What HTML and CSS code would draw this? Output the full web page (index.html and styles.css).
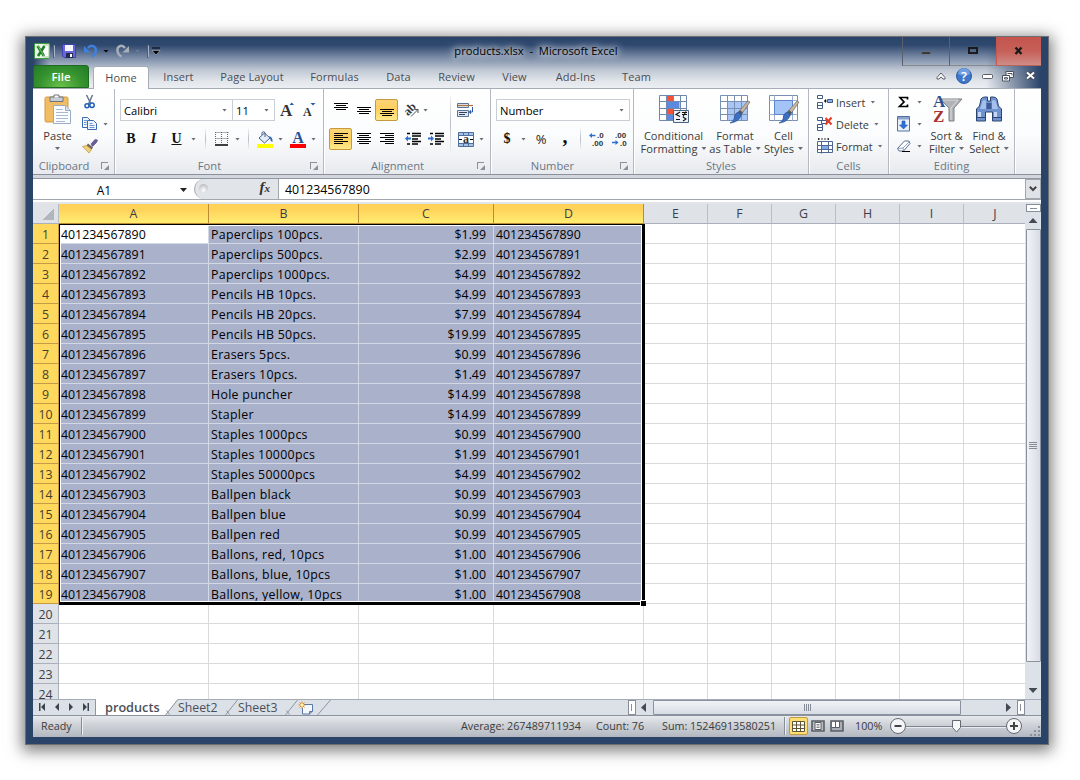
FILE: index.html
```html
<!DOCTYPE html>
<html>
<head>
    <meta charset="utf-8">
    <title>products.xlsx - Microsoft Excel</title>
    <link rel="stylesheet" href="styles.css">
</head>
<body>
<div class="window">
    <div class="top">
        <div class="titlebar">
            <div class="quick">
                <svg width="16" height="16" viewBox="0 0 16 16"><rect x=".5" y=".5" width="15" height="15" rx="1" fill="#e9f6e4" stroke="#3b9a3a"/><path d="M10 2h5v12h-5" fill="#fff" stroke="#9ccf93"/><path d="M3.500 3l6.500 10M10.500 3L4 13" stroke="#1d7c2a" stroke-width="2.600"/><path d="M4 3l6 10" stroke="#8fd07a" stroke-width=".8"/></svg>
                <i class="bar"></i>
                <svg class="save" width="14" height="14" viewBox="0 0 14 14"><path d="M.5.5h13v13H2l-1.500-1.500z" fill="#6a66da" stroke="#3f3fae"/><path d="M3 1h8v6H3z" fill="#f4f6ff"/><path d="M4 9h7v5H4z" fill="#222a55"/><path d="M8 10h2v3H8z" fill="#fff"/></svg>
                <svg class="undo" width="14" height="14" viewBox="0 0 14 14"><path d="M4 4C7 0 12.500 2 11.800 7c-.3 3-2 4.500-4 5.500" fill="none" stroke="#3f7fe0" stroke-width="2.400"/><path d="M0 2v6.500h6.500z" fill="#3f7fe0"/></svg>
                <i class="arrow dark"></i>
                <svg class="redo" width="14" height="14" viewBox="0 0 14 14"><path d="M9 4C6 0 .8 2 1.500 7c.3 3 2 4.500 4 5.500" fill="none" stroke="#a9afb8" stroke-width="2.400"/><path d="M13 2v6.500H6.500z" fill="#a9afb8"/></svg>
                <i class="arrow dim"></i>
                <i class="bar second"></i>
                <svg width="8" height="8" viewBox="0 0 8 8"><path d="M0 1h8" stroke="#000"/><path d="M0 3.500h8L4 8z" fill="#000" stroke="#ccd3dd" stroke-width=".5"/></svg>
            </div>
            <div class="title">products.xlsx&nbsp; -&nbsp; Microsoft Excel</div>
            <div class="controls">
                <span class="control"><svg width="12" height="12" viewBox="0 0 12 12"><path d="M1.500 7h9v2h-9z" fill="#222" stroke="#777" stroke-width=".6"/></svg></span>
                <span class="control"><svg width="12" height="12" viewBox="0 0 12 12"><path d="M2 3h8v5H2z" fill="none" stroke="#1b1b1b" stroke-width="2"/></svg></span>
                <span class="control close"><svg width="12" height="12" viewBox="0 0 12 12"><path d="M2.500 2.500l6 6.500M8.500 2.500l-6 6.500" stroke="#1b1b1b" stroke-width="2.400"/></svg></span>
            </div>
        </div>
        <div class="tabs">
            <span class="file">File</span>
            <span class="tab active">Home</span>
            <span class="tab t-insert">Insert</span>
            <span class="tab t-layout">Page Layout</span>
            <span class="tab t-formulas">Formulas</span>
            <span class="tab t-data">Data</span>
            <span class="tab t-review">Review</span>
            <span class="tab t-view">View</span>
            <span class="tab t-addins">Add-Ins</span>
            <span class="tab t-team">Team</span>
            <span class="help">
                <svg width="10" height="8" viewBox="0 0 10 8"><path d="M1 5.500L5 1l4 4.500V7H7L5 4.800 3 7H1z" fill="#fff" stroke="#555b64"/></svg>
                <svg width="16" height="16" viewBox="0 0 16 16"><circle cx="8" cy="8" r="7.500" fill="#3f78c8" stroke="#2c5ca8"/><path d="M2 6a6 6 0 0 1 12 0q-6 3-12 0" fill="#6f9fe0"/><text x="8" y="12.500" text-anchor="middle" class="qmark">?</text></svg>
                <svg width="11" height="6" viewBox="0 0 11 6"><rect x=".5" y="1.500" width="10" height="4" rx="1" fill="#fff" stroke="#555b64"/></svg>
                <svg width="12" height="11" viewBox="0 0 12 11"><path d="M4 .5h7.500v6H4z" fill="#fff" stroke="#4c535d"/><path d="M5.500 2.500H10v2" fill="none" stroke="#4c535d"/><path d="M.5 4.500h7v5.500h-7z" fill="#fff" stroke="#4c535d"/><path d="M2.500 6.700h3v1.300h-3z" fill="none" stroke="#4c535d"/></svg>
                <svg width="11" height="10" viewBox="0 0 11 10"><path d="M2 1.500l7 6M9 1.500l-7 6" stroke="#444b55" stroke-width="4"/><path d="M2 1.500l7 6M9 1.500l-7 6" stroke="#fff" stroke-width="2"/></svg>
            </span>
        </div>
    </div>

    <div class="ribbon">
        <div class="group clipboard">
            <div class="body">
                <div class="big">
                    <svg width="28" height="32" viewBox="0 0 28 32"><rect x="1" y="3" width="23" height="25" rx="1.500" fill="#f0bd64" stroke="#d29a3c"/><path d="M6 3h13v4.500H6z" fill="#c9ccd2" stroke="#6e747d"/><path d="M10 3.500V1h5v2.500" fill="#fff" stroke="#6e747d"/><path d="M9.500 11.500h12l5 5v13h-17z" fill="#fbfdff" stroke="#9aacc4"/><path d="M21.500 11.500v5h5" fill="#d6e2f0" stroke="#9aacc4"/><path d="M12 15.500h7M12 18.500h12M12 21.500h12M12 24.500h12M12 27.500h9" stroke="#a9b9ce"/></svg>
                    <span>Paste</span>
                    <i class="arrow"></i>
                </div>
                <div class="small">
                    <div><svg width="16" height="16" viewBox="0 0 16 16"><path d="M4.500 1l4.500 9M10.500 1L6.500 10" stroke="#66758c" stroke-width="1.500"/><circle cx="5" cy="11.800" r="2" fill="none" stroke="#1f5fb8" stroke-width="1.500"/><circle cx="10" cy="11.300" r="2.200" fill="none" stroke="#1f5fb8" stroke-width="1.500"/></svg></div>
                    <div><svg width="16" height="16" viewBox="0 0 16 16"><path d="M.5 1.500h5l2.500 2.500v7.500H.5z" fill="#eef5fd" stroke="#3b69b0"/><path d="M5.500 4.500h6l3 3v6h-9z" fill="#eef5fd" stroke="#3b69b0"/><path d="M2 4.500h3M2 6.500h2.500M2 8.500h2.500M7.500 7.500h3M7.500 9.500h5M7.500 11.500h5" stroke="#6f97cf"/></svg><i class="arrow"></i></div>
                    <div><svg width="16" height="16" viewBox="0 0 16 16"><path d="M9 6l4-4.500 2.500.5-1 2.500-4 4z" fill="#6c5c9c" stroke="#4a3e78" stroke-width=".6"/><path d="M6 5.500l5 4-1.500 2-5-4z" fill="#6d655c"/><path d="M.5 8.500l4-1 5 4L7 15z" fill="#efd07a" stroke="#bb9440" stroke-width=".7"/></svg></div>
                </div>
            </div>
            <div class="label">Clipboard<i class="launch"></i></div>
        </div>

        <div class="group font">
            <div class="body rows">
                <div class="row font-1">
                    <span class="combo">Calibri<i class="arrow"></i></span>
                    <span class="combo size">11<i class="arrow"></i></span>
                    <svg width="16" height="18" viewBox="0 0 16 18"><text x="1" y="15" class="serif s17">A</text><path d="M10.500 4H15L12.700 1.500z" fill="#2b5aa8"/></svg>
                    <svg width="15" height="18" viewBox="0 0 15 18"><text x="1" y="15" class="serif s12">A</text><path d="M8.500 2h5L11 4.500z" fill="#2b5aa8"/></svg>
                </div>
                <div class="row font-2">
                    <b class="serif-btn">B</b>
                    <b class="serif-btn it">I</b>
                    <b class="serif-btn un">U</b>
                    <i class="arrow"></i>
                    <i class="sep"></i>
                    <svg width="14" height="14" viewBox="0 0 14 14"><path d="M.5.5h13M.5 6.500h13M.5 0v12M6.500 0v12M12.500 0v12" stroke="#666" stroke-dasharray="1 1" fill="none"/><path d="M0 13h13" stroke="#000" stroke-width="1.500"/></svg>
                    <i class="arrow"></i>
                    <i class="sep"></i>
                    <svg width="16" height="17" viewBox="0 0 16 17"><path d="M2 7l5.500-5L13 7l-5.500 5z" fill="#e3edf8" stroke="#4b6188"/><path d="M5 4V1.500Q6.500 0 8 1.500V6" fill="none" stroke="#4b6188"/><path d="M12 5q4 1 3.500 6-2-.5-2.500-4z" fill="#2f67b8"/><path d="M0 13h16v4H0z" fill="#ff0"/></svg>
                    <i class="arrow"></i>
                    <svg width="16" height="17" viewBox="0 0 16 17"><text x="8" y="11.500" text-anchor="middle" class="serif blue s16">A</text><path d="M0 13h16v4H0z" fill="#f00"/></svg>
                    <i class="arrow"></i>
                </div>
            </div>
            <div class="label">Font<i class="launch"></i></div>
        </div>

        <div class="group align">
            <div class="body">
                <div class="rows">
                    <div class="row align-cols">
                        <span class="btn"><svg class="up3" width="14" height="12" viewBox="0 0 14 12"><path d="M0 1.500h14M2 3.500h10M0 5.500h14M2 7.500h10" stroke="#000"/></svg></span>
                        <span class="btn"><svg width="14" height="12" viewBox="0 0 14 12"><path d="M0 3.500h14M2 5.500h10M0 7.500h14M2 9.500h10" stroke="#000"/></svg></span>
                        <span class="btn on"><svg width="14" height="12" viewBox="0 0 14 12"><path d="M0 5.500h14M2 7.500h10M0 9.500h14M2 11.500h10" stroke="#000"/></svg></span>
                        <span></span>
                        <span class="orient"><svg width="16" height="16" viewBox="0 0 16 16"><text x="-1" y="11" transform="rotate(-45 5 8)" class="serif s12">ab</text><path d="M6 14.500l7-7M9.500 7.500H13V11" stroke="#555" fill="none"/></svg><i class="arrow"></i></span>
                    </div>
                    <div class="row align-cols">
                        <span class="btn on"><svg width="14" height="12" viewBox="0 0 14 12"><path d="M0 .5h14M0 2.500h9M0 4.500h14M0 6.500h9M0 8.500h14M0 10.500h9" stroke="#000"/></svg></span>
                        <span class="btn"><svg width="14" height="12" viewBox="0 0 14 12"><path d="M0 .5h14M2 2.500h10M0 4.500h14M2 6.500h10M0 8.500h14M2 10.500h10" stroke="#000"/></svg></span>
                        <span class="btn"><svg width="14" height="12" viewBox="0 0 14 12"><path d="M0 .5h14M5 2.500h9M0 4.500h14M5 6.500h9M0 8.500h14M5 10.500h9" stroke="#000"/></svg></span>
                        <span></span>
                        <span class="btn"><svg width="16" height="14" viewBox="0 0 16 14"><path d="M2 1.500h3M7 1.500h9M7 4h9M7 7h6M7 9.500h9M2 12h3M7 12h6" stroke="#000" stroke-width="1.300"/><path d="M0 6.500l3-3v2h3v2H3v2z" fill="#2f6fd0"/></svg></span>
                        <span class="btn"><svg width="16" height="14" viewBox="0 0 16 14"><path d="M2 1.500h3M7 1.500h9M7 4h9M7 7h6M7 9.500h9M2 12h3M7 12h6" stroke="#000" stroke-width="1.300"/><path d="M6 6.500l-3-3v2H0v2h3v2z" fill="#2f6fd0"/></svg></span>
                    </div>
                </div>
                <i class="sep tall"></i>
                <div class="rows">
                    <div class="row merge"><svg width="17" height="16" viewBox="0 0 17 16"><path d="M.5 1.500h11v4H.5zM.5 8.500h11v6H.5z" fill="#dce8f6" stroke="#5a7498"/><path d="M2 10.500h8M2 12.500h6" stroke="#33445e"/><path d="M1 3.500h15" stroke="#b0703a" stroke-width="1.200"/><path d="M15.500 5v5h-2" stroke="#2c5ca8" fill="none"/><path d="M11.500 10l2.500-2.200v4.400z" fill="#2c5ca8"/></svg></div>
                    <div class="row merge"><svg width="16" height="15" viewBox="0 0 16 15"><path d="M.5.5h15v14H.5z" fill="#a9c2e4" stroke="#4d6f9f"/><path d="M.5 3.500h15M.5 11.500h15M5.500 0v3.500M10.500 0v3.500M5.500 11.500V15M10.500 11.500V15" stroke="#4d6f9f"/><path d="M1 4h14v7H1z" fill="#fff"/><text x="8" y="10.500" text-anchor="middle" class="serif s12">a</text><path d="M1 7.500h3M12 7.500h3" stroke="#000"/></svg><i class="arrow"></i></div>
                </div>
            </div>
            <div class="label">Alignment<i class="launch"></i></div>
        </div>

        <div class="group number">
            <div class="body rows">
                <div class="row"><span class="combo num">Number<i class="arrow"></i></span></div>
                <div class="row number-2">
                    <b class="serif-btn">$</b>
                    <i class="arrow"></i>
                    <span class="percent">%</span>
                    <b class="comma">,</b>
                    <i class="sep"></i>
                    <svg width="16" height="14" viewBox="0 0 16 14"><text x="8" y="5.500" class="dec">.0</text><text x="3" y="13.500" class="dec">.00</text><path d="M0 3.500l3-2.500v1.700h3.500v1.600H3V6z" fill="#2f6fd0"/></svg>
                    <svg width="16" height="14" viewBox="0 0 16 14"><text x="3" y="5.500" class="dec">.00</text><text x="8" y="13.500" class="dec">.0</text><path d="M6.500 10.500l-3-2.500v1.700H0v1.600h3.500V13z" fill="#2f6fd0"/></svg>
                </div>
            </div>
            <div class="label">Number<i class="launch"></i></div>
        </div>

        <div class="group styles">
            <div class="body">
                <div class="big">
                    <svg width="32" height="30" viewBox="0 0 32 30"><path d="M1.500 1.500h27v25h-27z" fill="#fff"/><path d="M8.500 1.500h7v6h-7zM8.500 14.500h7v6h-7z" fill="#f5523c"/><path d="M8.500 8h13v6h-13zM8.500 20.500h7v6h-7z" fill="#5b8ae0"/><path d="M1.500 1.500h27v25h-27zM8.500 1.500v25M15.500 1.500v25M22.500 1.500v25M1.500 7.500h27M1.500 14.500h27M1.500 20.500h27" fill="none" stroke="#6f88ad"/><path d="M15.500 16.500h15v12h-15z" fill="#eef2f8" stroke="#4c607f"/><path d="M22 18l-4 2.500 4 2M18 25.500h4M24 20.500h5M24 18.500h5M28 17.500l-3 5M25 23l3 2-3 2" fill="none" stroke="#111" stroke-width="1.100"/></svg>
                    <span>Conditional</span><span>Formatting<i class="arrow"></i></span>
                </div>
                <div class="big">
                    <svg width="32" height="30" viewBox="0 0 32 30"><path d="M1.500 1.500h27v25h-27z" fill="#fff"/><path d="M8.500 7.500h20v19h-20z" fill="#a9c6f6"/><path d="M1.500 1.500h27v25h-27zM8.500 1.500v25M15.500 1.500v25M22.500 1.500v25M1.500 7.500h27M1.500 14.500h27M1.500 20.500h27" fill="none" stroke="#7990b5"/><path d="M31 8L22 21l-3-2.500L29 7z" fill="#c9b79c" stroke="#6c6c6c" stroke-width=".7"/><path d="M22 21l-3-2.500 2-2.500 3 2.500z" fill="#555c66"/><path d="M19 18l3.500 3q-3 7.500-11.500 8 4.500-2 4.500-7 1-3 3.500-4z" fill="#3d6fc0" stroke="#244e92" stroke-width=".6"/></svg>
                    <span>Format</span><span>as Table<i class="arrow"></i></span>
                </div>
                <div class="big">
                    <svg width="32" height="30" viewBox="0 0 32 30"><path d="M1.500 1.500h28v25h-28z" fill="#fff" stroke="#7990b5"/><path d="M1.500 6.500h28M1.500 20.500h28M6.500 1.500v25M24.500 1.500v25M15.500 20.500v6" stroke="#9db0cd"/><path d="M6.500 6.500h18v14h-18z" fill="#a4c3f6" stroke="#5f86c6"/><path d="M31 8L22 21l-3-2.500L29 7z" fill="#c9b79c" stroke="#6c6c6c" stroke-width=".7"/><path d="M22 21l-3-2.500 2-2.500 3 2.500z" fill="#555c66"/><path d="M19 18l3.500 3q-3 7.500-11.500 8 4.500-2 4.500-7 1-3 3.500-4z" fill="#3d6fc0" stroke="#244e92" stroke-width=".6"/></svg>
                    <span>Cell</span><span>Styles<i class="arrow"></i></span>
                </div>
            </div>
            <div class="label">Styles</div>
        </div>

        <div class="group cells">
            <div class="body">
                <div class="small">
                    <div><svg width="16" height="16" viewBox="0 0 16 16"><path d="M.5 1.500h5v3h-5zM.5 8.500h5v6h-5zM.5 11.500h5" fill="#fff" stroke="#3f5c88"/><path d="M10.500 5.500h5v3h-5z" fill="#8fb0e4" stroke="#3f5c88"/><path d="M9.500 7H7M8.500 5.500v3" stroke="#000" stroke-width="1.200"/></svg><span>Insert</span><i class="arrow"></i></div>
                    <div><svg width="16" height="16" viewBox="0 0 16 16"><path d="M.5 1.500h5v3h-5zM.5 8.500h5v6h-5zM.5 11.500h5M4.500 4.500h5v3h-5z" fill="#fff" stroke="#3f5c88"/><path d="M8.500 2l6 6.500M14.500 1.500l-6 7" stroke="#e83a1e" stroke-width="2"/></svg><span>Delete</span><i class="arrow"></i></div>
                    <div><svg width="16" height="16" viewBox="0 0 16 16"><path d="M.5 3.500h15v11H.5z" fill="#fff"/><path d="M5 7h6v4H5z" fill="#7fa8ee"/><path d="M.5 3.500h15v11H.5zM4.500 3.500v12M11.500 3.500v11M.5 7.500h15M.5 11.500h15" fill="none" stroke="#4d6791"/><path d="M1 1h11M1.500 0v2.500M11.500 0v2.500" stroke="#333" stroke-dasharray="2 1"/></svg><span>Format</span><i class="arrow"></i></div>
                </div>
            </div>
            <div class="label">Cells</div>
        </div>

        <div class="group editing">
            <div class="body">
                <div class="small">
                    <div><svg width="16" height="14" viewBox="0 0 16 14"><path d="M11.500 4.500V2.500H4L8 7l-4.500 4.500h8v-2" fill="none" stroke="#000" stroke-width="1.700"/></svg><i class="arrow"></i></div>
                    <div><svg width="16" height="16" viewBox="0 0 16 16"><path d="M1.500.5h12v14.500h-12z" fill="#e9f0fa" stroke="#50709f"/><path d="M2 1h11v2.500H2z" fill="#8aa5cd"/><path d="M6 5h3v4h2.500L7.500 13 3.500 9H6z" fill="#2f6fd8" stroke="#1e50a8" stroke-width=".6"/></svg><i class="arrow"></i></div>
                    <div><svg width="16" height="16" viewBox="0 0 16 16"><path d="M1.500 10.500L8.500 3H13l1 2.500L7.500 13H3z" fill="#fff" stroke="#5a6f94"/><path d="M1.500 10.500L7 10l6.500-6.500M7 10l.5 3" fill="none" stroke="#8ea2c4"/><path d="M6 13.500h8" stroke="#000"/></svg><i class="arrow"></i></div>
                </div>
                <div class="big">
                    <svg width="32" height="30" viewBox="0 0 32 30"><path d="M9 5h22l-8 9v13h-5V14z" fill="#b1b3b6" stroke="#7f8185"/><path d="M12 6h15l-7 8v12" fill="none" stroke="#dcdddf"/><text x="2" y="13" class="serif blue s17">A</text><text x="2" y="27.500" class="serif red s17">Z</text></svg>
                    <span>Sort &amp;</span><span>Filter<i class="arrow"></i></span>
                </div>
                <div class="big">
                    <svg width="32" height="30" viewBox="0 0 32 30"><path d="M12 3h2.500v4h3V3H20q3 0 4 2l1.500 7 3 3v12h-9v-9h-7v9h-9V15l3-3L8 5q1-2 4-2z" fill="#6f93cf" stroke="#2c4472"/><path d="M9.500 7q2-2 3.500 0v8H7zM19 7q2-2 3.500 0l2.500 8h-6z" fill="#a5c0ec"/><path d="M5 18h3v5H5zM21 18h3v5h-3z" fill="#c5d8f6"/><path d="M13.500 9h5v6h-5z" fill="#3e5b93"/><path d="M3.500 23.500h9M19.500 23.500h9" stroke="#2c4472"/></svg>
                    <span>Find &amp;</span><span>Select<i class="arrow"></i></span>
                </div>
            </div>
            <div class="label">Editing</div>
        </div>
    </div>

    <div class="formula">
        <div class="name"><span>A1</span><i class="arrow black"></i></div>
        <div class="fx"><i class="knob"></i><span>f<small>x</small></span></div>
        <div class="value">401234567890</div>
        <div class="expand"><svg width="8" height="6" viewBox="0 0 8 6"><path d="M.8.8L4 4 7.200.8" fill="none" stroke="#444" stroke-width="2"/></svg></div>
    </div>

    <div class="main">
        <div class="sheet">
            <div id="grid"></div>
            <div class="selection"></div>
            <div class="handle"></div>
        </div>
        <div class="vscroll">
            <i class="vsplit"></i>
            <i class="tri up"></i>
            <div class="vthumb"><i></i><i></i><i></i><i></i></div>
            <i class="tri down"></i>
        </div>
    </div>

    <div class="bottom">
        <div class="nav">
            <svg width="8" height="8" viewBox="0 0 8 8"><path d="M1 0h1.500v8H1zM7 0v8L3 4z" fill="#3c4450"/></svg>
            <svg width="8" height="8" viewBox="0 0 8 8"><path d="M6 0v8L2 4z" fill="#3c4450"/></svg>
            <svg width="8" height="8" viewBox="0 0 8 8"><path d="M2 0v8l4-4z" fill="#3c4450"/></svg>
            <svg width="8" height="8" viewBox="0 0 8 8"><path d="M5.500 0H7v8H5.500zM1 0v8l4-4z" fill="#3c4450"/></svg>
        </div>
        <span class="stab current">products</span>
        <svg class="slant" width="13" height="15" viewBox="0 0 13 15"><path d="M0-1h12.500L.5 15H0z" fill="#fff"/><path d="M.5 15L12.500 0M1.500 10.500l3 4" stroke="#8e959f"/></svg>
        <span class="stab">Sheet2</span>
        <svg class="slant" width="13" height="15" viewBox="0 0 13 15"><path d="M.5 15L12.500 0" stroke="#8e959f"/><path d="M1.500 10.500l3 4" stroke="#8e959f"/></svg>
        <span class="stab">Sheet3</span>
        <svg class="slant" width="13" height="15" viewBox="0 0 13 15"><path d="M.5 15L12.500 0" stroke="#8e959f"/><path d="M1.500 10.500l3 4" stroke="#8e959f"/></svg>
        <span class="stab new"><svg width="16" height="14" viewBox="0 0 16 14"><path d="M6 3.500h8.500v7l-3 2.500H4.500V7" fill="#f4f8fd" stroke="#5b77a8"/><path d="M14.500 10.500h-3V13" fill="#9fb7dd" stroke="#5b77a8"/><path d="M4 .5v7M.5 4h7M1.500 1.500l5 5M6.500 1.500l-5 5" stroke="#e08a1c"/><circle cx="4" cy="4" r="1.500" fill="#fff3b0"/></svg></span>
        <svg class="slant" width="14" height="15" viewBox="0 0 14 15"><path d="M.5 15L13.500 0" stroke="#8e959f"/></svg>
        <div class="fill"></div>
        <i class="hsplit"></i>
        <div class="hscroll">
            <i class="tri left"></i>
            <div class="hthumb"><i></i><i></i><i></i><i></i></div>
            <i class="tri right"></i>
        </div>
        <i class="hsplit"></i>
        <div class="corner"></div>
    </div>

    <div class="status">
        <span class="ready">Ready</span>
        <i class="ssep"></i>
        <span class="stats"><span class="avg">Average: 267489711934</span><span class="count">Count: 76</span><span class="sum">Sum: 15246913580251</span></span>
        <i class="ssep"></i>
        <div class="views">
            <span class="view on"><svg width="13" height="11" viewBox="0 0 13 11"><path d="M.5.5h12v10H.5z" fill="#fff" stroke="#5c5636"/><path d="M4.500 0v11M8.500 0v11M0 4h13M0 7.500h13" stroke="#5c5636"/></svg></span>
            <span class="view"><svg width="14" height="12" viewBox="0 0 14 12"><path d="M1 1h12v10H1z" fill="#b9bec5" stroke="#5a5f66" stroke-width="1.600"/><path d="M4 2.500h6v7H4z" fill="#fff" stroke="#5a5f66"/><path d="M5.500 4.500h3M5.500 6h3M5.500 7.500h3" stroke="#888"/></svg></span>
            <span class="view"><svg width="14" height="12" viewBox="0 0 14 12"><path d="M1 1h12v10H1z" fill="#a9aeb6" stroke="#5a5f66" stroke-width="1.600"/><path d="M2 2h3v5H2zM6 2h3v5H6z" fill="#fff"/><path d="M5.500 1v6.500M9.500 1v6.500H2" stroke="#5a5f66" fill="none"/></svg></span>
        </div>
        <span class="zoom">100%</span>
        <svg class="slider" width="134" height="18" viewBox="0 0 134 18"><path d="M17 9.500h100" stroke="#7c838e"/><path d="M17 10.500h100" stroke="#e8eaee"/><circle cx="9" cy="9" r="7.500" fill="#f4f5f7" stroke="#636973"/><path d="M5.500 9h7" stroke="#444" stroke-width="2"/><circle cx="125" cy="9" r="7.500" fill="#f4f5f7" stroke="#636973"/><path d="M121 9h8M125 5v8" stroke="#444" stroke-width="2"/><path d="M63.500 3.500h8v7L67.500 15l-4-4.500z" fill="#f6f7f8" stroke="#636973"/></svg>
        <svg class="grip" width="12" height="12" viewBox="0 0 12 12"><path d="M9 1h2v2H9zM9 5h2v2H9zM5 5h2v2H5zM9 9h2v2H9zM5 9h2v2H5zM1 9h2v2H1z" fill="#8b919b"/></svg>
    </div>
</div>

<script>
    const columns = ['A', 'B', 'C', 'D', 'E', 'F', 'G', 'H', 'I', 'J'];
    const products = [
        ['401234567890', 'Paperclips 100pcs.', '$1.99'],
        ['401234567891', 'Paperclips 500pcs.', '$2.99'],
        ['401234567892', 'Paperclips 1000pcs.', '$4.99'],
        ['401234567893', 'Pencils HB 10pcs.', '$4.99'],
        ['401234567894', 'Pencils HB 20pcs.', '$7.99'],
        ['401234567895', 'Pencils HB 50pcs.', '$19.99'],
        ['401234567896', 'Erasers 5pcs.', '$0.99'],
        ['401234567897', 'Erasers 10pcs.', '$1.49'],
        ['401234567898', 'Hole puncher', '$14.99'],
        ['401234567899', 'Stapler', '$14.99'],
        ['401234567900', 'Staples 1000pcs', '$0.99'],
        ['401234567901', 'Staples 10000pcs', '$1.99'],
        ['401234567902', 'Staples 50000pcs', '$4.99'],
        ['401234567903', 'Ballpen black', '$0.99'],
        ['401234567904', 'Ballpen blue', '$0.99'],
        ['401234567905', 'Ballpen red', '$0.99'],
        ['401234567906', 'Ballons, red, 10pcs', '$1.00'],
        ['401234567907', 'Ballons, blue, 10pcs', '$1.00'],
        ['401234567908', 'Ballons, yellow, 10pcs', '$1.00']
    ];

    const grid = document.getElementById('grid');

    function addCell(row, className, text) {
        const cell = document.createElement('div');
        cell.className = className;
        cell.textContent = text || '';
        row.appendChild(cell);
    }

    function addRow() {
        const row = document.createElement('div');
        row.className = 'grid-row';
        grid.appendChild(row);
        return row;
    }

    const head = addRow();
    addCell(head, 'select-all');
    columns.forEach((name, i) => addCell(head, i < 4 ? 'col-head picked' : 'col-head', name));

    const extra = ['', ' product', ' price', ''];

    for (let r = 0; r < 24; r++) {
        const row = addRow();
        const product = products[r];
        addCell(row, product ? 'row-head picked' : 'row-head', String(r + 1));
        columns.forEach((name, i) => {
            if (product && i < 4) {
                addCell(row, 'cell picked' + extra[i], i === 3 ? product[0] : product[i]);
            } else {
                addCell(row, 'cell');
            }
        });
    }
</script>
</body>
</html>
```

FILE: styles.css
```css
* {
    box-sizing: border-box;
}
body {
    margin: 0;
    width: 1080px;
    height: 780px;
    overflow: hidden;
    background: #fff;
    font-family: "Open Sans", "Noto Sans", sans-serif;
    font-size: 11px;
    color: #3b3b3b;
}
svg {
    display: block;
    flex: none;
    overflow: visible;
}
.window {
    width: 1024px;
    height: 709px;
    margin: 36px 0 0 25px;
    padding: 0 7px 7px;
    border: 1px solid #6d6f73;
    background: #2a4369;
    box-shadow: 0 3px 14px 3px rgba(0, 0, 0, 0.5);
}

/* title bar and tabs */
.top {
    height: 52px;
    margin: 0 -7px;
    padding: 0 7px;
    background: linear-gradient(90deg, #2a4369 7px, rgba(42, 67, 105, 0) 24px, rgba(42, 67, 105, 0) 960px, #2a4369 1015px), linear-gradient(#2a4369, #2f486e 8px, #8292ac 22px, #bfc7d3 33px, #e2e6eb 44px, #eceff3);
}
.titlebar {
    display: flex;
    height: 29px;
}
.quick {
    display: flex;
    align-items: center;
    width: 412px;
    padding: 0 0 1px 1px;
}
.bar {
    width: 2px;
    height: 13px;
    margin-left: 3px;
    border: 1px solid #4b5c78;
    border-right-color: #a7b3c6;
}
.bar.second {
    margin-left: 7px;
    margin-right: 3px;
}
.save { margin-left: 7px; }
.undo { margin-left: 8px; }
.redo { margin-left: 7px; }
.quick .arrow { margin-left: 5px; }
.title {
    width: 182px;
    margin-top: 5px;
    line-height: 18px;
    font-size: 11.200px;
    text-align: center;
    color: #000;
    white-space: nowrap;
    text-shadow: 0 0 6px #fff, 0 0 8px #e5eaf2, 0 0 12px #c5d0e0;
}
.controls {
    display: flex;
    margin-left: auto;
}
.control {
    display: flex;
    align-items: center;
    justify-content: center;
    width: 47px;
    height: 29px;
    border-left: 1px solid #59606c;
    border-bottom: 1px solid #87898d;
}
.control.close {
    width: 45px;
    border-left-color: #c3574f;
    border-bottom-color: #b9635c;
    background: linear-gradient(#c4544c, #c66058 50%, #cf8c86);
}
.tabs {
    display: flex;
    align-items: flex-end;
    height: 23px;
    border-bottom: 1px solid #a6adb8;
}
.file {
    width: 56px;
    height: 23px;
    border: 1px solid #1c6b1f;
    border-radius: 3px 3px 0 0;
    background: radial-gradient(ellipse at 50% 100%, #6cc24a, #36942f 55%, #237a26);
    color: #fff;
    font-weight: 600;
    font-size: 11.500px;
    line-height: 22px;
    text-align: center;
}
.tab {
    line-height: 23px;
    text-align: center;
    white-space: nowrap;
    font-size: 11px;
    letter-spacing: 0.100px;
    color: #4a4e54;
}
.tab.active {
    width: 56px;
    height: 23px;
    margin: 0 0 -1px 4px;
    border: 1px solid #a6adb8;
    border-bottom: none;
    border-radius: 3px 3px 0 0;
    background: #fff;
    line-height: 22px;
}
.t-insert { width: 59px; }
.t-layout { width: 88px; }
.t-formulas { width: 77px; }
.t-data { width: 51px; }
.t-review { width: 65px; }
.t-view { width: 51px; }
.t-addins { width: 71px; }
.t-team { width: 51px; }
.help {
    display: flex;
    align-items: center;
    gap: 10px;
    height: 22px;
    margin-left: auto;
    padding: 0 5px 2px 0;
}
.help svg:nth-child(3) { margin-right: -1px; }
.help svg:nth-child(4) { margin-right: 1px; }
.qmark {
    font: 600 13px "Open Sans", sans-serif;
    fill: #fff;
}

/* ribbon */
.ribbon {
    display: flex;
    height: 86px;
    border-bottom: 1px solid #8b909a;
    background: linear-gradient(#fff, #fbfcfd 55%, #e7eaee);
}
.group {
    display: flex;
    flex-direction: column;
    border-right: 1px solid #b4b9c1;
    box-shadow: 1px 0 0 #fff;
}
.clipboard { width: 82px; }
.font { width: 209px; }
.align { width: 167px; }
.number { width: 143px; }
.styles { width: 175px; }
.cells { width: 80px; }
.editing { width: 126px; }
.body {
    display: flex;
    flex: 1;
}
.label {
    position: relative;
    height: 16px;
    padding-right: 19px;
    line-height: 16px;
    font-size: 11.200px;
    text-align: center;
    color: #6b7685;
}
.styles .label,
.cells .label,
.editing .label {
    padding-right: 0;
}
.launch {
    position: absolute;
    right: 6px;
    top: 4px;
    width: 7px;
    height: 7px;
    border-left: 1px solid #8a909a;
    border-top: 1px solid #8a909a;
}
.launch::after {
    content: "";
    position: absolute;
    left: 2px;
    top: 2px;
    border-left: 5px solid transparent;
    border-bottom: 5px solid #8a909a;
}
.arrow {
    flex: none;
    width: 5px;
    height: 3px;
    background: #6a6e74;
    clip-path: polygon(0 0, 100% 0, 50% 100%);
}
.arrow.dark {
    width: 6px;
    background: #000;
}
.quick .arrow.dim {
    background: #6b7c96;
    margin-left: 5px;
}
.arrow.black {
    width: 7px;
    height: 4px;
    background: #222;
}
.big {
    display: flex;
    flex-direction: column;
    align-items: center;
    line-height: 13px;
    font-size: 11.100px;
    white-space: nowrap;
}
.big span .arrow {
    display: inline-block;
    margin: 0 0 3px 4px;
}
.clipboard .big {
    width: 49px;
    padding-top: 5px;
}
.clipboard .big span {
    margin-top: 3px;
}
.clipboard .big > .arrow {
    margin-top: 5px;
}
.small {
    display: grid;
    grid-template-rows: repeat(3, 22px);
    padding-top: 2px;
    align-items: center;
    align-content: start;
}
.small div {
    display: flex;
    align-items: center;
    font-size: 10.900px;
}
.small .arrow {
    margin-left: 5px;
}
.small span {
    margin-left: 3px;
}
.rows {
    display: flex;
    flex-direction: column;
    gap: 7px;
    padding-top: 10px;
}
.font .rows,
.number .rows {
    padding-left: 5px;
}
.row {
    display: grid;
    grid-template-rows: 22px;
    height: 22px;
    align-items: center;
    justify-items: center;
}
.font-1 { grid-template-columns: 113px 42px 24px 20px; }
.font-2 { grid-template-columns: 22px 23px 23px 11px 12px 21px 11px 11px 22px 9px 25px 7px; }
.align-cols { grid-template-columns: 23px 23px 23px 4px 22px 23px; }
.number-2 { grid-template-columns: 22px 11px 24px 24px 7px 26px 20px; }
.combo {
    display: flex;
    align-items: center;
    justify-content: space-between;
    justify-self: start;
    width: 113px;
    height: 22px;
    padding: 0 5px 0 3px;
    border: 1px solid #c9cdd4;
    background: #fff;
    color: #000;
    font-size: 11.200px;
}
.combo.size {
    width: 43px;
    margin-left: -1px;
}
.combo.num {
    width: 134px;
}
.serif {
    font-family: "Liberation Serif", serif;
    font-weight: bold;
    fill: #333;
}
.s17 { font-size: 17px; }
.s16 { font-size: 16px; }
.s12 { font-size: 12px; }
.blue { fill: #2c4f94; }
.red { fill: #a83232; }
.serif-btn {
    font: bold 14px "Liberation Serif", serif;
    color: #111;
}
.it { font-style: italic; }
.un { text-decoration: underline; }
.percent {
    font-size: 13px;
    line-height: 20px;
    color: #222;
}
.comma {
    height: 20px;
    font: bold 20px/14px "Liberation Serif", serif;
    color: #111;
}
.dec {
    font: bold 8px "Liberation Sans", sans-serif;
    fill: #333;
}
.sep {
    width: 1px;
    height: 20px;
    background: linear-gradient(#eef0f2, #b9bec6, #eef0f2);
}
.sep.tall {
    height: 56px;
    margin: 7px 2px 0 3px;
}
.align .body {
    padding-left: 5px;
}
.btn {
    display: flex;
    align-items: center;
    justify-content: center;
    width: 23px;
    height: 22px;
}
.btn.on {
    border: 1px solid #c69a3c;
    border-radius: 2px;
    background: linear-gradient(#fbd579, #ffcf5c 45%, #ffe98a);
}
.up3 { margin-top: -5px; }
.orient {
    display: flex;
    align-items: center;
    justify-self: start;
    gap: 2px;
    padding-left: 3px;
}
.row.merge {
    grid-template-columns: 25px 7px;
}
.styles .body {
    padding-left: 5px;
}
.styles .big {
    padding-top: 5px;
}
.styles .big svg,
.editing .big svg {
    margin-bottom: 5px;
}
.styles .big:nth-child(1) { width: 69px; }
.styles .big:nth-child(2) { width: 54px; }
.styles .big:nth-child(3) { width: 43px; }
.cells .small { padding-left: 8px; }
.editing .small { padding-left: 7px; }
.editing .big { padding-top: 5px; }
.editing .big:nth-child(2) { width: 43px; margin-left: 3px; }
.editing .big:nth-child(3) { width: 42px; }

/* formula bar */
.formula {
    display: flex;
    height: 29px;
    padding: 4px 0 0 1px;
    border-top: 3px solid #d3d7dd;
    background: linear-gradient(#8f98a4 1px, #fff 1px, #fff 21px, #a2a7ae 21px, #a2a7ae 22px, #fff 22px, #fff 24px, #e1e4e9 24px);
    color: #000;
}
.name {
    display: flex;
    align-items: center;
    width: 160px;
    height: 16px;
}
.name span {
    width: 140px;
    text-align: center;
    font-size: 12px;
}
.name .arrow {
    margin-left: 6px;
}
.fx {
    display: flex;
    align-items: center;
    justify-content: space-between;
    width: 85px;
    height: 20px;
    margin-top: -3px;
    padding: 0 8px 2px 4px;
    border-left: 1px solid #a2a7ae;
    border-right: 1px solid #a2a7ae;
    border-radius: 10px 0 0 10px;
    background: #e1e4e9;
}
.fx span {
    font: italic bold 15px/17px "Liberation Serif", serif;
    color: #333;
}
.fx small {
    font-size: 11px;
}
.knob {
    width: 9px;
    height: 9px;
    border-radius: 50%;
    background: radial-gradient(circle at 50% 70%, #fff, #a8acb3);
}
.value {
    flex: 1;
    padding-left: 6px;
    line-height: 16px;
    font-size: 12.350px;
}
.expand {
    display: flex;
    align-items: center;
    justify-content: center;
    width: 16px;
    height: 20px;
    margin-top: -3px;
    border: 1px solid #a2a7ae;
    background: #dfe2e7;
}

/* sheet */
.main {
    display: flex;
    height: 495px;
    overflow: hidden;
}
.sheet {
    position: relative;
    width: 992px;
    overflow: hidden;
    background: #fff;
}
.grid-row {
    display: grid;
    grid-template-columns: 26px 150px 150px 135px 150px repeat(5, 64px) 62px;
    grid-template-rows: 20px;
    height: 20px;
}
.select-all,
.col-head,
.row-head {
    height: 20px;
    border-right: 1px solid #a9b0bb;
    border-bottom: 1px solid #a9b0bb;
    background: #dfe2e7;
    color: #3a3f47;
    font-size: 12.350px;
    line-height: 20px;
    text-align: center;
}
.row-head {
    padding-top: 1px;
}
.col-head,
.select-all {
    border-right-color: #b9bec6;
    box-shadow: 0 -1px 0 #8c95a3;
}
.cell:last-child {
    border-right: none;
}
.col-head:last-child {
    border-right: none;
}
.select-all {
    background: linear-gradient(135deg, transparent 50%, #b1b5bc 50%) 9px 5px / 12px 11px no-repeat #dfe2e7;
}
.col-head.picked {
    border-color: #bd8a35;
    background: linear-gradient(#ffd254, #ffd35c 30%, #ffee72);
}
.row-head.picked {
    border-color: #c79a47;
    background: #ffd95d;
    color: #453f2c;
}
.cell {
    height: 20px;
    border-right: 1px solid #d8dadc;
    border-bottom: 1px solid #d8dadc;
    padding: 1px 0 0 2px;
    color: #000;
    font-size: 12.350px;
    line-height: 20px;
    white-space: nowrap;
}
.cell.picked {
    border-color: #d3d8e5;
    background: #a9b1cb;
}
.grid-row:nth-child(2) .cell:nth-child(2) {
    background: #fff;
}
.cell.product {
    letter-spacing: 0.300px;
}
.cell.price {
    padding-right: 7px;
    text-align: right;
}
.selection {
    position: absolute;
    left: 26px;
    top: 20px;
    width: 586px;
    height: 381px;
    border: solid #000;
    border-width: 1px 3px 3px 1px;
    box-shadow: inset 0 0 0 1px #fff;
}
.handle {
    position: absolute;
    left: 607px;
    top: 396px;
    width: 6px;
    height: 6px;
    border: solid #fff;
    border-width: 1px 0 0 1px;
    background: #000;
}
.vscroll {
    display: flex;
    flex-direction: column;
    align-items: center;
    width: 16px;
    background: #dde1e8;
}
.vsplit {
    width: 15px;
    height: 8px;
    border: 1px solid #868e9a;
    background: linear-gradient(#868e9a, #868e9a) center 3px / 7px 1px no-repeat #fff;
}
.tri {
    background: #444a54;
}
.tri.up {
    width: 9px;
    height: 5px;
    margin-top: 6px;
    clip-path: polygon(50% 0, 100% 100%, 0 100%);
}
.tri.down {
    width: 9px;
    height: 5px;
    margin-top: 26px;
    clip-path: polygon(0 0, 100% 0, 50% 100%);
}
.vthumb {
    display: flex;
    flex-direction: column;
    justify-content: center;
    align-items: center;
    gap: 1px;
    width: 15px;
    height: 433px;
    margin-top: 6px;
    border: 1px solid #8a92a0;
    border-radius: 1px;
    background: linear-gradient(90deg, #f1f3f6, #d8dce3);
}
.vthumb i {
    width: 8px;
    height: 1px;
    background: #868d98;
}

/* sheet tabs */
.bottom {
    display: flex;
    height: 17px;
    border-top: 1px solid #a4abb6;
    border-bottom: 1px solid #8b929d;
    background: #dce0e7;
}
.nav {
    display: flex;
    justify-content: space-between;
    align-items: center;
    width: 63px;
    padding: 0 5px 1px;
    border-right: 1px solid #8e959f;
}
.stab {
    width: 47px;
    line-height: 15px;
    font-size: 12.300px;
    white-space: nowrap;
    color: #4b5058;
}
.stab.current {
    width: 69px;
    margin-top: -1px;
    padding-left: 9px;
    line-height: 17px;
    background: #fff;
    font-size: 12.700px;
    font-weight: 600;
}
.stab.new {
    display: flex;
    align-items: center;
    width: 19px;
}
.fill {
    flex: 1;
}
.hsplit {
    width: 8px;
    height: 15px;
    border: 1px solid #868e9a;
    background: linear-gradient(#868e9a, #868e9a) 2px center / 1px 7px no-repeat #fff;
}
.hscroll {
    display: flex;
    align-items: center;
    width: 381px;
    padding: 0 5px;
}
.tri.left {
    width: 5px;
    height: 9px;
    clip-path: polygon(0 50%, 100% 0, 100% 100%);
}
.tri.right {
    width: 5px;
    height: 9px;
    margin-left: auto;
    margin-right: 1px;
    clip-path: polygon(0 0, 100% 50%, 0 100%);
}
.hthumb {
    display: flex;
    justify-content: center;
    align-items: center;
    gap: 1px;
    width: 308px;
    height: 15px;
    margin-left: 7px;
    border: 1px solid #8a92a0;
    border-radius: 1px;
    background: linear-gradient(#f1f3f6, #d8dce3);
}
.hthumb i {
    width: 1px;
    height: 7px;
    background: #868d98;
}
.corner {
    width: 16px;
}

/* status bar */
.status {
    display: flex;
    align-items: center;
    height: 21px;
    padding-bottom: 1px;
    background: linear-gradient(#e6e9ed, #cfd3d9 40%, #b3b8c0);
    font-size: 10.750px;
}
.ready {
    width: 48px;
    padding-left: 8px;
}
.ssep {
    width: 2px;
    height: 18px;
    border-left: 1px solid #868d98;
    border-right: 1px solid #eef0f3;
}
.stats {
    display: flex;
    width: 701px;
    padding-left: 378px;
    white-space: nowrap;
}
.avg { width: 135px; }
.count { width: 66px; }
.views {
    display: flex;
    align-items: center;
    gap: 1px;
    padding-left: 3px;
}
.view {
    display: flex;
    align-items: center;
    justify-content: center;
    width: 18px;
    height: 18px;
}
.view.on {
    width: 19px;
    border: 1px solid #c69a3c;
    border-radius: 2px;
    background: #ffdf74;
}
.zoom {
    width: 28px;
    margin-left: 9px;
}
.slider {
    margin-left: 6px;
}
.grip {
    margin: 9px 0 0 auto;
}
```
